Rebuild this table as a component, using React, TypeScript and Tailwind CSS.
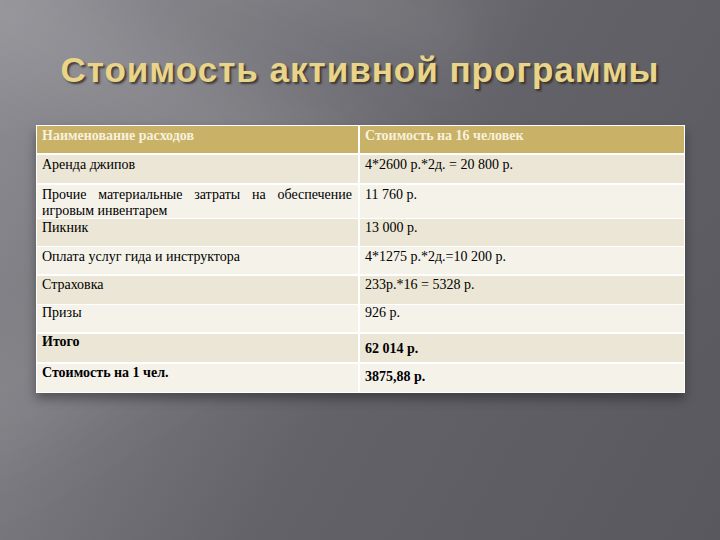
const rows = [
  { name: "Аренда джипов", cost: "4*2600 р.*2д. = 20 800 р.", h: "h-[28px]", gap: "mt-[2px]", dark: true, pad: "pt-[2px]" },
  {
    name: "Прочие материальные затраты на обеспечение игровым инвентарем",
    cost: "11 760 р.",
    h: "h-[33px]",
    gap: "mt-[2px]",
    dark: false,
    justify: true,
    pad: "pt-[2px]",
  },
  { name: "Пикник", cost: "13 000 р.", h: "h-[27px]", gap: "mt-[1px]", dark: true, pad: "pt-[1px]" },
  { name: "Оплата услуг гида и инструктора", cost: "4*1275 р.*2д.=10 200 р.", h: "h-[27px]", gap: "mt-[1px]", dark: false, pad: "pt-[2px]" },
  { name: "Страховка", cost: "233р.*16 = 5328 р.", h: "h-[28px]", gap: "mt-[2px]", dark: true, pad: "pt-[1px]" },
  { name: "Призы", cost: "926 р.", h: "h-[27px]", gap: "mt-[1px]", dark: false, pad: "pt-[0px]" },
  { name: "Итого", cost: "62 014 р.", h: "h-[28px]", gap: "mt-[2px]", dark: true, bold: true, pad: "pt-[0px]", costPad: "pt-[7px]" },
  { name: "Стоимость на 1 чел.", cost: "3875,88 р.", h: "h-[28px]", gap: "mt-[2px]", dark: false, bold: true, pad: "pt-[1px]", costPad: "pt-[5px]" },
];

export default function App() {
  return (
    <div className="relative w-[720px] h-[540px] overflow-hidden bg-[linear-gradient(120deg,#8f8e94_0%,#7b7a80_25%,#636268_55%,#59585e_100%)] font-['Liberation_Serif',serif]">
      <div className="absolute -left-[120px] top-[40px] w-[520px] h-[90px] rotate-[28deg] bg-white/10 blur-2xl" />
      <div className="absolute -left-[80px] top-[300px] w-[420px] h-[60px] -rotate-[32deg] bg-white/10 blur-2xl" />
      <div className="absolute left-[180px] top-[-40px] w-[300px] h-[60px] rotate-[20deg] bg-white/5 blur-xl" />

      <div className="relative flex flex-col items-center">
        <h1 className="mt-[46px] h-[48px] text-[35px] leading-[48px] font-bold tracking-[1px] text-[#e9d48a] font-['Liberation_Sans',sans-serif] [text-shadow:2px_2px_2px_rgba(40,38,30,0.75)]">
          Стоимость активной программы
        </h1>

        <div className="mt-[31px] w-[649px] ml-[1px] bg-white p-[1px] shadow-[0_6px_10px_rgba(0,0,0,0.35)]">
          <div className="flex h-[27px] bg-[#c9b267] text-[14px] leading-[16px] font-bold text-[#f7f1dc]">
            <div className="w-[323px] pl-[5px] pt-[2px] border-r-2 border-white">Наименование расходов</div>
            <div className="flex-1 pl-[5px] pt-[2px]">Стоимость на 16 человек</div>
          </div>
          {rows.map((r) => (
            <div
              key={r.name}
              className={`flex ${r.h} ${r.gap} text-[14px] leading-[16px] text-black ${
                r.dark ? "bg-[#ebe6d5]" : "bg-[#f5f2ea]"
              } ${r.bold ? "font-bold" : ""}`}
            >
              <div
                className={`w-[323px] pl-[5px] pr-[6px] ${r.pad} border-r-2 border-white ${
                  r.justify ? "text-justify" : ""
                }`}
              >
                {r.name}
              </div>
              <div className={`flex-1 pl-[5px] ${r.costPad ?? r.pad}`}>{r.cost}</div>
            </div>
          ))}
        </div>
      </div>
    </div>
  );
}
